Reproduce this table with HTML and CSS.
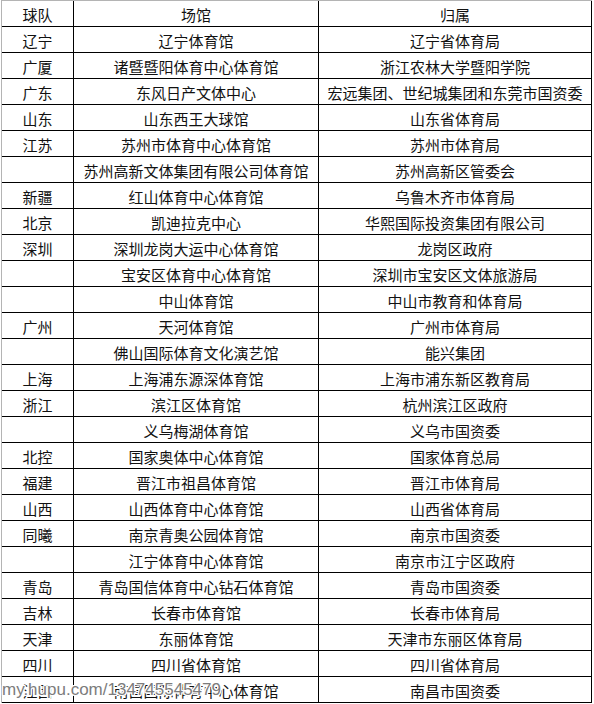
FILE: index.html
```html
<!DOCTYPE html>
<html lang="zh-CN">
<head>
<meta charset="utf-8">
<title>球队场馆归属</title>
<link rel="stylesheet" href="styles.css">
</head>
<body>
<div class="page">
  <div class="sheet">
    <div class="c">球队</div><div class="c">场馆</div><div class="c">归属</div>
    <div class="c">辽宁</div><div class="c">辽宁体育馆</div><div class="c">辽宁省体育局</div>
    <div class="c">广厦</div><div class="c">诸暨暨阳体育中心体育馆</div><div class="c">浙江农林大学暨阳学院</div>
    <div class="c">广东</div><div class="c">东风日产文体中心</div><div class="c">宏远集团、世纪城集团和东莞市国资委</div>
    <div class="c">山东</div><div class="c">山东西王大球馆</div><div class="c">山东省体育局</div>
    <div class="c">江苏</div><div class="c">苏州市体育中心体育馆</div><div class="c">苏州市体育局</div>
    <div class="c"></div><div class="c">苏州高新文体集团有限公司体育馆</div><div class="c">苏州高新区管委会</div>
    <div class="c">新疆</div><div class="c">红山体育中心体育馆</div><div class="c">乌鲁木齐市体育局</div>
    <div class="c">北京</div><div class="c">凯迪拉克中心</div><div class="c">华熙国际投资集团有限公司</div>
    <div class="c">深圳</div><div class="c">深圳龙岗大运中心体育馆</div><div class="c">龙岗区政府</div>
    <div class="c"></div><div class="c">宝安区体育中心体育馆</div><div class="c">深圳市宝安区文体旅游局</div>
    <div class="c"></div><div class="c">中山体育馆</div><div class="c">中山市教育和体育局</div>
    <div class="c">广州</div><div class="c">天河体育馆</div><div class="c">广州市体育局</div>
    <div class="c"></div><div class="c">佛山国际体育文化演艺馆</div><div class="c">能兴集团</div>
    <div class="c">上海</div><div class="c">上海浦东源深体育馆</div><div class="c">上海市浦东新区教育局</div>
    <div class="c">浙江</div><div class="c">滨江区体育馆</div><div class="c">杭州滨江区政府</div>
    <div class="c"></div><div class="c">义乌梅湖体育馆</div><div class="c">义乌市国资委</div>
    <div class="c">北控</div><div class="c">国家奥体中心体育馆</div><div class="c">国家体育总局</div>
    <div class="c">福建</div><div class="c">晋江市祖昌体育馆</div><div class="c">晋江市体育局</div>
    <div class="c">山西</div><div class="c">山西体育中心体育馆</div><div class="c">山西省体育局</div>
    <div class="c">同曦</div><div class="c">南京青奥公园体育馆</div><div class="c">南京市国资委</div>
    <div class="c"></div><div class="c">江宁体育中心体育馆</div><div class="c">南京市江宁区政府</div>
    <div class="c">青岛</div><div class="c">青岛国信体育中心钻石体育馆</div><div class="c">青岛市国资委</div>
    <div class="c">吉林</div><div class="c">长春市体育馆</div><div class="c">长春市体育局</div>
    <div class="c">天津</div><div class="c">东丽体育馆</div><div class="c">天津市东丽区体育局</div>
    <div class="c">四川</div><div class="c">四川省体育馆</div><div class="c">四川省体育局</div>
    <div class="c">江西</div><div class="c">南昌国际体育中心体育馆</div><div class="c">南昌市国资委</div>
  </div>
  <div class="watermark">my.hupu.com/134745545479</div>
</div>
</body>
</html>
```

FILE: styles.css
```css
html, body {
  margin: 0;
  padding: 0;
  background: #fff;
}

.page {
  position: relative;
  width: 594px;
  height: 704px;
  overflow: hidden;
}

.sheet {
  display: grid;
  grid-template-columns: 72px 245px 273px;
  grid-auto-rows: 26px;
  width: max-content;
  margin-left: 1px;
  border-top: 1px solid #b4b4b4;
  border-left: 1px solid #b4b4b4;
}

.c {
  box-sizing: border-box;
  border-right: 1px solid #000;
  border-bottom: 1px solid #000;
  display: flex;
  align-items: center;
  justify-content: center;
  padding-top: 1px;
  font-family: "Noto Sans CJK SC", sans-serif;
  font-size: 15px;
  line-height: 1;
  color: #111;
  white-space: nowrap;
}

.watermark {
  position: absolute;
  left: 2px;
  top: 679px;
  font-family: "Liberation Sans", Arial, sans-serif;
  font-size: 17px;
  line-height: 21px;
  color: #7c7c7c;
  text-shadow: 1px 0 0 #fff, -1px 0 0 #fff, 0 1px 0 #fff, 0 -1px 0 #fff,
    1px 1px 0 #fff, -1px -1px 0 #fff, 1px -1px 0 #fff, -1px 1px 0 #fff;
}
```
